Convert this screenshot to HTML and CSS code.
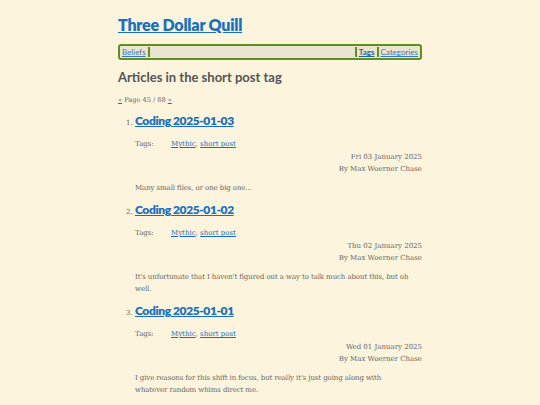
FILE: index.html
```html
<!DOCTYPE html>
<html>
<head>
<meta charset="utf-8">
<link rel="stylesheet" href="styles.css">
</head>
<body>
<div class="page">
  <header class="site-header">
    <h1 class="site-title"><a href="#">Three Dollar Quill</a></h1>
    <nav class="menu">
      <a href="#" class="menu-item">Beliefs</a>
      <span class="menu-fill"></span>
      <a href="#" class="menu-item current">Tags</a>
      <a href="#" class="menu-item">Categories</a>
    </nav>
  </header>
  <main>
    <h2 class="tag-heading">Articles in the short post tag</h2>
    <p class="pager"><a href="#">«</a> Page 45 / 88 <a href="#">»</a></p>
    <ol class="articles" start="1">
      <li class="article">
        <h3 class="article-title"><a href="#">Coding 2025-01-03</a></h3>
        <div class="tags"><span class="tags-label">Tags:</span><span><a href="#">Mythic</a>, <a href="#">short post</a></span></div>
        <div class="meta"><div>Fri 03 January 2025</div><div>By Max Woerner Chase</div></div>
        <p class="summary">Many small files, or one big one...</p>
      </li>
      <li class="article">
        <h3 class="article-title"><a href="#">Coding 2025-01-02</a></h3>
        <div class="tags"><span class="tags-label">Tags:</span><span><a href="#">Mythic</a>, <a href="#">short post</a></span></div>
        <div class="meta"><div>Thu 02 January 2025</div><div>By Max Woerner Chase</div></div>
        <p class="summary">It's unfortunate that I haven't figured out a way to talk much about this, but oh well.</p>
      </li>
      <li class="article">
        <h3 class="article-title"><a href="#">Coding 2025-01-01</a></h3>
        <div class="tags"><span class="tags-label">Tags:</span><span><a href="#">Mythic</a>, <a href="#">short post</a></span></div>
        <div class="meta"><div>Wed 01 January 2025</div><div>By Max Woerner Chase</div></div>
        <p class="summary">I give reasons for this shift in focus, but really it's just going along with whatever random whims direct me.</p>
      </li>
    </ol>
  </main>
</div>
</body>
</html>
```

FILE: styles.css
```css
html, body {
  margin: 0;
  padding: 0;
  background: #fcf4dc;
}
body {
  font-family: "DejaVu Serif", serif;
  color: #666;
  font-size: 7px;
}
a { color: #1a6fc0; }
.page {
  width: 304px;
  margin: 0 auto;
  padding-top: 14px;
}
.site-title {
  font-family: Lato, "Open Sans", sans-serif;
  font-weight: 800;
  font-size: 16px;
  letter-spacing: -0.2px;
  margin: 0 0 8px 0;
  line-height: 22px;
}
.site-title a { color: #1a70c0; }
.menu {
  display: flex;
  align-items: center;
  border: 2px solid #5f8f1c;
  border-radius: 3px;
  background: #ebe4d0;
  height: 12px;
  padding: 0 2px;
  font-family: Lato, sans-serif;
  font-size: 8px;
}
.menu-item { color: #3a78b8; }
.menu-item.current { font-weight: 700; color: #2a64a0; }
.menu-fill {
  flex: 1;
  align-self: stretch;
  border-left: 2px solid #5f8f1c;
  border-right: 2px solid #5f8f1c;
  margin: 1px 2px;
}
.menu-item + .menu-item {
  border-left: 2px solid #5f8f1c;
  margin-left: 2px;
  padding-left: 2px;
}
.tag-heading {
  font-family: Lato, sans-serif;
  font-weight: 700;
  font-size: 13px;
  color: #555;
  margin: 9px 0 10px 0;
}
.pager {
  font-size: 6.6px;
  line-height: 10px;
  margin: 0 0 8px 0;
}
.articles {
  margin: 0;
  padding-left: 17px;
  font-size: 7px;
  line-height: 12px;
}
.article-title {
  font-family: Lato, sans-serif;
  font-weight: 800;
  font-size: 12px;
  letter-spacing: -0.4px;
  margin: 0 0 9px 0;
  line-height: 16px;
}
.tags {
  display: flex;
  line-height: 12px;
  margin-bottom: 1px;
}
.tags-label { width: 36px; }
.meta {
  text-align: right;
  line-height: 12px;
}
.summary {
  line-height: 12px;
  letter-spacing: -0.1px;
  margin: 7px 10px 8px 0;
}
```
